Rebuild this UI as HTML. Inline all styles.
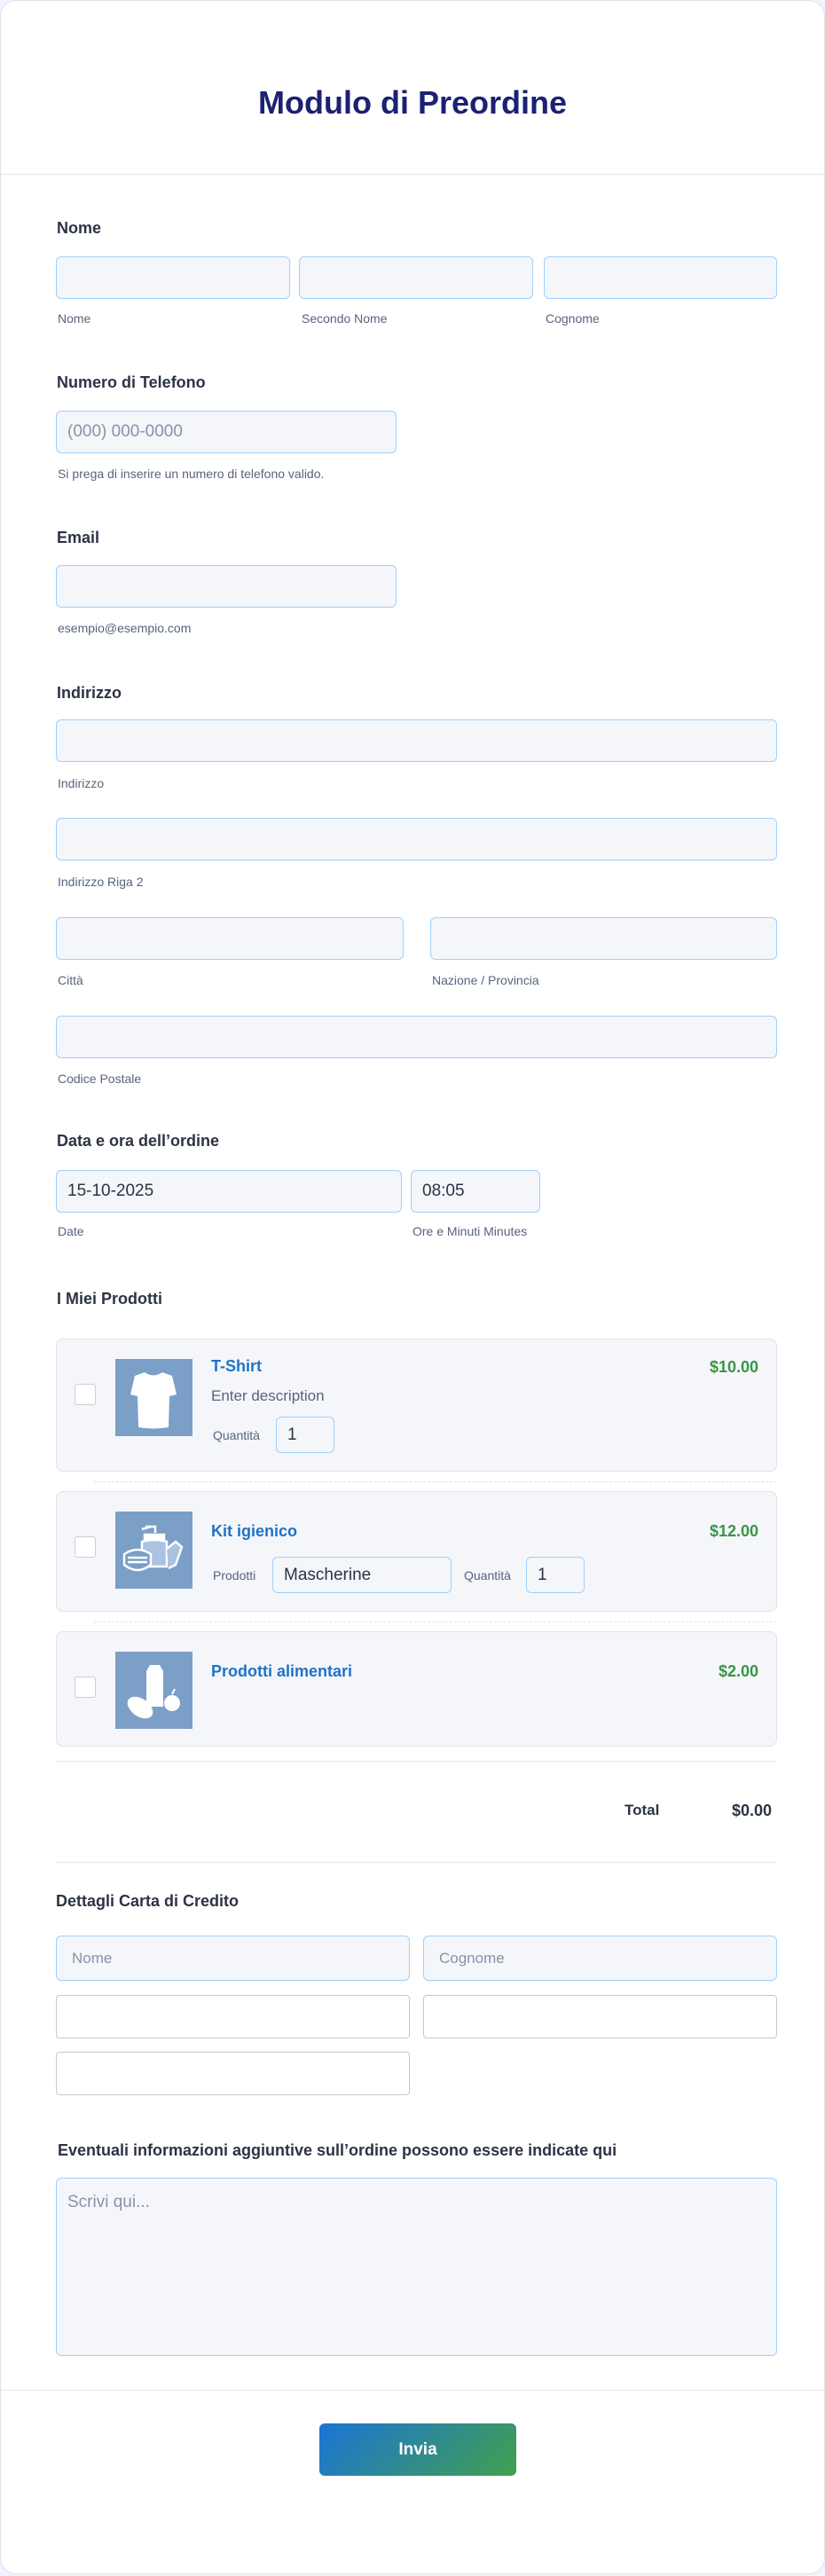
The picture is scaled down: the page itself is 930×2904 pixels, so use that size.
<!DOCTYPE html>
<html><head><meta charset="utf-8"><style>
*{box-sizing:border-box;margin:0;padding:0}
body{width:930px;height:2904px;background:#f3f3fe;font-family:"Liberation Sans",Arial,sans-serif;position:relative;overflow:hidden}
.card{position:absolute;left:0;top:0;width:930px;height:2902px;background:#fff;border:1px solid #e1e3ea;border-radius:18px}
.a{position:absolute}
.h{font-size:36px;font-weight:bold;color:#1b2272;width:930px;text-align:center;top:95px}
.line{position:absolute;height:1px;background:#e3e6ee}
.lbl{position:absolute;font-size:18px;font-weight:bold;color:#2c3345}
.sub{position:absolute;font-size:14px;color:#57647e}
.in{position:absolute;background:#f4f6fa;border:1px solid #9fd0fb;border-radius:6px;font-size:19px;color:#2c3345;padding-left:12px;display:flex;align-items:center}
.ph{color:#8993a6}
.wh{position:absolute;background:#fff;border:1px solid #c3c8d2;border-radius:4px}
.prod{position:absolute;left:63px;width:813px;background:#f4f6fa;border:1px solid #dfe3ea;border-radius:8px}
.cb{position:absolute;left:20px;width:24px;height:24px;background:#fff;border:1px solid #c9ced8;border-radius:3px}
.img{position:absolute;left:66px;width:87px;height:87px;background:#7b9fc7}
.pt{position:absolute;left:174px;font-size:18px;font-weight:bold;color:#1e73c6}
.pr{position:absolute;right:20px;font-size:18px;font-weight:bold;color:#3a9447}
.sm{position:absolute;font-size:15px;color:#57647e}
.dash{position:absolute;left:106px;width:770px;border-top:1px dashed #dde1e8}
</style></head><body>
<div class="card"></div>
<div class="a h">Modulo di Preordine</div>
<div class="line" style="left:1px;top:196px;width:928px"></div>

<div class="lbl" style="left:64px;top:247px">Nome</div>
<div class="in" style="left:63px;top:289px;width:264px;height:48px"></div>
<div class="in" style="left:337px;top:289px;width:264px;height:48px"></div>
<div class="in" style="left:613px;top:289px;width:263px;height:48px"></div>
<div class="sub" style="left:65px;top:351px">Nome</div>
<div class="sub" style="left:340px;top:351px">Secondo Nome</div>
<div class="sub" style="left:615px;top:351px">Cognome</div>

<div class="lbl" style="left:64px;top:421px">Numero di Telefono</div>
<div class="in ph" style="left:63px;top:463px;width:384px;height:48px">(000) 000-0000</div>
<div class="sub" style="left:65px;top:526px">Si prega di inserire un numero di telefono valido.</div>

<div class="lbl" style="left:64px;top:596px">Email</div>
<div class="in" style="left:63px;top:637px;width:384px;height:48px"></div>
<div class="sub" style="left:65px;top:700px">esempio@esempio.com</div>

<div class="lbl" style="left:64px;top:771px">Indirizzo</div>
<div class="in" style="left:63px;top:811px;width:813px;height:48px"></div>
<div class="sub" style="left:65px;top:875px">Indirizzo</div>
<div class="in" style="left:63px;top:922px;width:813px;height:48px"></div>
<div class="sub" style="left:65px;top:986px">Indirizzo Riga 2</div>
<div class="in" style="left:63px;top:1034px;width:392px;height:48px"></div>
<div class="in" style="left:485px;top:1034px;width:391px;height:48px"></div>
<div class="sub" style="left:65px;top:1097px">Città</div>
<div class="sub" style="left:487px;top:1097px">Nazione / Provincia</div>
<div class="in" style="left:63px;top:1145px;width:813px;height:48px"></div>
<div class="sub" style="left:65px;top:1208px">Codice Postale</div>

<div class="lbl" style="left:64px;top:1276px">Data e ora dell’ordine</div>
<div class="in" style="left:63px;top:1319px;width:390px;height:48px">15-10-2025</div>
<div class="in" style="left:463px;top:1319px;width:146px;height:48px">08:05</div>
<div class="sub" style="left:65px;top:1380px">Date</div>
<div class="sub" style="left:465px;top:1380px">Ore e Minuti Minutes</div>

<div class="lbl" style="left:64px;top:1454px">I Miei Prodotti</div>

<div class="prod" style="top:1509px;height:150px">
 <div class="cb" style="top:50px"></div>
 <div class="img" style="top:22px"><svg width="87" height="87" viewBox="0 0 87 87"><path d="M33 15 L22 19 L17 40 L25 42 L26 77 Q43 80 60 77 L61 42 L69 40 L64 19 L53 15 Q43 22 33 15Z" fill="#fff"/></svg></div>
 <div class="pt" style="top:20px">T-Shirt</div>
 <div class="pr" style="top:21px">$10.00</div>
 <div class="sm" style="left:174px;top:54px;font-size:17px">Enter description</div>
 <div class="sm" style="left:176px;top:100px;font-size:14px">Quantità</div>
 <div class="in" style="left:247px;top:87px;width:66px;height:41px">1</div>
</div>
<div class="dash" style="top:1670px"></div>
<div class="prod" style="top:1681px;height:136px">
 <div class="cb" style="top:50px"></div>
 <div class="img" style="top:22px"><svg width="87" height="87" viewBox="0 0 87 87" fill="none" stroke="#fff" stroke-width="2.5"><path d="M34 17 H45 V24 M40 17 L30 20"/><rect x="33" y="26" width="22" height="6" fill="#fff"/><path d="M30 34 Q44 30 58 34 V62 H30Z" fill="#a9c3e0"/><path d="M58 42 L68 34 L75 40 L68 60 L60 64" fill="#a9c3e0"/><path d="M10 48 Q25 38 40 48 V60 Q25 72 10 60Z" fill="#7b9fc7"/><path d="M14 52 H36 M14 57 H36"/></svg></div>
 <div class="pt" style="top:34px">Kit igienico</div>
 <div class="pr" style="top:34px">$12.00</div>
 <div class="sm" style="left:176px;top:86px;font-size:14px">Prodotti</div>
 <div class="in" style="left:243px;top:73px;width:202px;height:41px">Mascherine</div>
 <div class="sm" style="left:459px;top:86px;font-size:14px">Quantità</div>
 <div class="in" style="left:529px;top:73px;width:66px;height:41px">1</div>
</div>
<div class="dash" style="top:1828px"></div>
<div class="prod" style="top:1839px;height:130px">
 <div class="cb" style="top:50px"></div>
 <div class="img" style="top:22px"><svg width="87" height="87" viewBox="0 0 87 87"><path d="M35 22 L39 15 H50 L54 22 V62 H35Z" fill="#fff"/><ellipse cx="28" cy="63" rx="16" ry="10" transform="rotate(35 28 63)" fill="#fff"/><circle cx="64" cy="58" r="9" fill="#fff"/><path d="M64 48 L67 42" stroke="#fff" stroke-width="2"/></svg></div>
 <div class="pt" style="top:34px">Prodotti alimentari</div>
 <div class="pr" style="top:34px">$2.00</div>
</div>
<div class="line" style="left:63px;top:1985px;width:813px"></div>

<div class="a" style="left:704px;top:2031px;font-size:17px;font-weight:bold;color:#2c3345">Total</div>
<div class="a" style="left:825px;top:2031px;font-size:18px;font-weight:bold;color:#2c3345">$0.00</div>
<div class="line" style="left:63px;top:2099px;width:813px"></div>

<div class="lbl" style="left:63px;top:2133px">Dettagli Carta di Credito</div>
<div class="in ph" style="left:63px;top:2182px;width:399px;height:51px;padding-left:17px;font-size:17px">Nome</div>
<div class="in ph" style="left:477px;top:2182px;width:399px;height:51px;padding-left:17px;font-size:17px">Cognome</div>
<div class="wh" style="left:63px;top:2249px;width:399px;height:49px"></div>
<div class="wh" style="left:477px;top:2249px;width:399px;height:49px"></div>
<div class="wh" style="left:63px;top:2313px;width:399px;height:49px"></div>

<div class="lbl" style="left:65px;top:2414px">Eventuali informazioni aggiuntive sull’ordine possono essere indicate qui</div>
<div class="in ph" style="left:63px;top:2455px;width:813px;height:201px;align-items:flex-start;padding-top:16px;font-size:19px">Scrivi qui...</div>

<div class="line" style="left:1px;top:2694px;width:928px"></div>
<div class="a" style="left:360px;top:2732px;width:222px;height:59px;border-radius:6px;background:linear-gradient(135deg,#1b74d6,#42a04d);color:#fff;font-size:19px;font-weight:bold;display:flex;align-items:center;justify-content:center">Invia</div>
</body></html>
